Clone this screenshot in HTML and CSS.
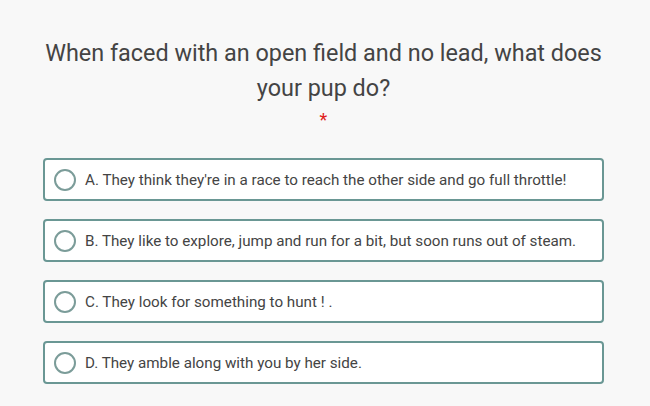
FILE: index.html
```html
<!DOCTYPE html>
<html>
<head>
<meta charset="utf-8">
<link rel="stylesheet" href="styles.css">
</head>
<body>
<div class="quiz">
  <h1 class="question">When faced with an open field and no lead, what does your pup do?</h1>
  <div class="required">*</div>
  <div class="options">
    <label class="option"><span class="radio"></span><span class="text">A. They think they're in a race to reach the other side and go full throttle!</span></label>
    <label class="option"><span class="radio"></span><span class="text">B. They like to explore, jump and run for a bit, but soon runs out of steam.</span></label>
    <label class="option"><span class="radio"></span><span class="text">C. They look for something to hunt ! .</span></label>
    <label class="option"><span class="radio"></span><span class="text">D. They amble along with you by her side.</span></label>
  </div>
</div>
</body>
</html>
```
FILE: styles.css
```css
html, body {
  margin: 0;
  padding: 0;
  background: #f8f8f8;
}
body {
  font-family: Roboto, "Liberation Sans", sans-serif;
  color: #444;
}
.quiz {
  width: 561px;
  padding-top: 36px;
  margin-left: 43px;
}
.question {
  margin: 0 -10px;
  font-size: 23.4px;
  font-weight: 400;
  line-height: 35px;
  text-align: center;
  color: #444;
}
.required {
  text-align: center;
  color: #e02020;
  font-size: 18px;
  line-height: 20px;
  margin-top: 4px;
}
.options {
  display: flex;
  flex-direction: column;
  gap: 18px;
  margin-top: 28px;
}
.option {
  display: flex;
  align-items: center;
  box-sizing: border-box;
  height: 43px;
  padding: 0 10px 0 9px;
  background: #fff;
  border: 2px solid #6a9794;
  border-radius: 4px;
  font-size: 15.2px;
}
.radio {
  width: 22px;
  height: 22px;
  border: 2px solid #7b9c99;
  border-radius: 50%;
  box-sizing: border-box;
  margin-right: 9px;
  flex-shrink: 0;
}
.text {
  color: #444;
}
```
